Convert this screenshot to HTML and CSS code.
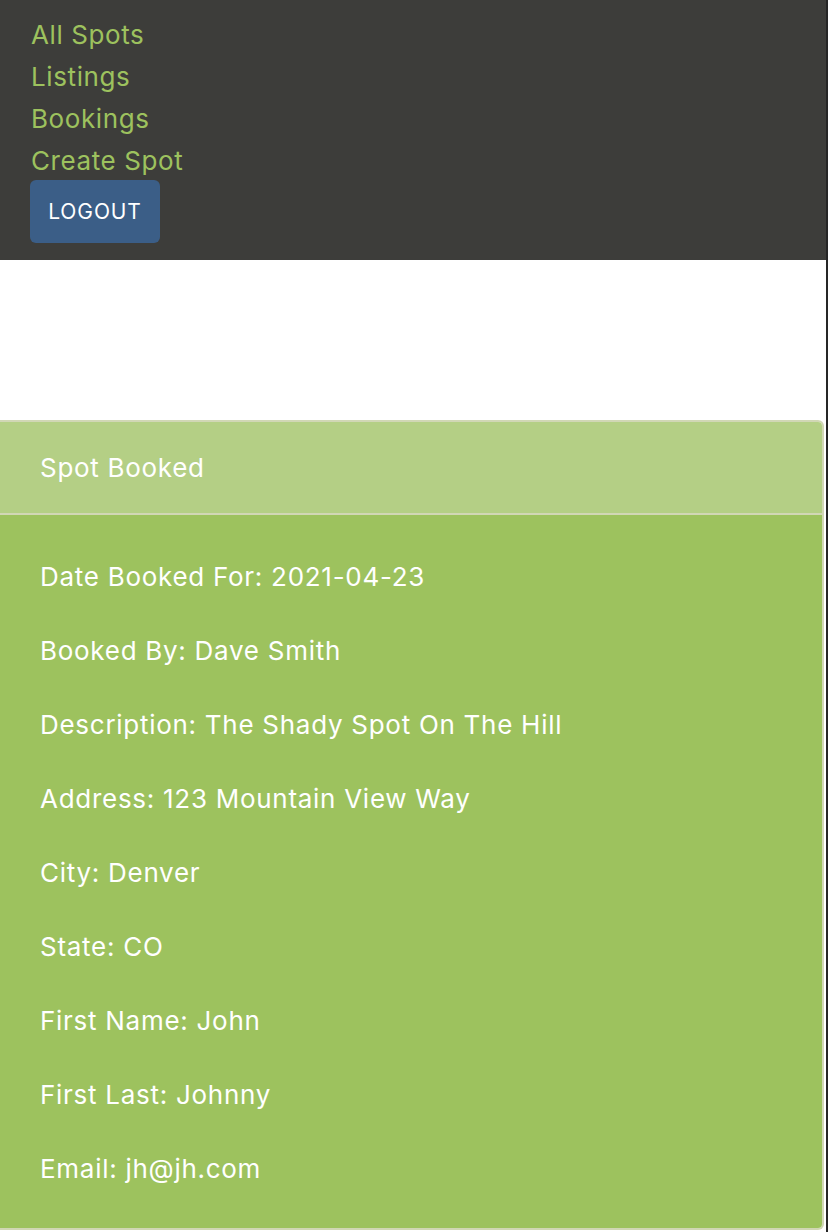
FILE: index.html
```html
<!DOCTYPE html>
<html lang="en">
<head>
<meta charset="utf-8">
<title>Spot Booked</title>
<link rel="stylesheet" href="styles.css">
</head>
<body>
<div class="page">
  <nav class="nav">
    <a class="nav-link" href="#">All Spots</a>
    <a class="nav-link" href="#">Listings</a>
    <a class="nav-link" href="#">Bookings</a>
    <a class="nav-link" href="#">Create Spot</a>
    <button class="logout" type="button">LOGOUT</button>
  </nav>
  <main class="main">
    <section class="card">
      <header class="card-header">Spot Booked</header>
      <div class="card-body">
        <p class="row">Date Booked For: 2021-04-23</p>
        <p class="row">Booked By: Dave Smith</p>
        <p class="row">Description: The Shady Spot On The Hill</p>
        <p class="row">Address: 123 Mountain View Way</p>
        <p class="row">City: Denver</p>
        <p class="row">State: CO</p>
        <p class="row">First Name: John</p>
        <p class="row">First Last: Johnny</p>
        <p class="row">Email: jh@jh.com</p>
      </div>
    </section>
  </main>
</div>
</body>
</html>
```
FILE: styles.css
```css
html {
  background: #262626;
}
body {
  margin: 0;
  font-family: Inter, "Noto Sans", "Liberation Sans", sans-serif;
}
.page {
  width: 826px;
  min-height: 1232px;
  background: #ffffff;
}
.nav {
  background: #3d3d3a;
  display: flex;
  flex-direction: column;
  align-items: flex-start;
  padding: 14px 0 17px 31px;
}
.nav-link {
  color: #9dc25e;
  text-decoration: none;
  font-size: 26px;
  letter-spacing: 0.6px;
  line-height: 42px;
}
.logout {
  margin-top: -2px;
  margin-left: -1px;
  width: 130px;
  height: 63px;
  border: none;
  border-radius: 6px;
  background: #3b5e87;
  color: #ffffff;
  font-family: inherit;
  font-size: 21px;
  letter-spacing: 0.9px;
}
.main {
  padding-top: 160px;
}
.card {
  border: 2px solid #d1d7b5;
  border-left: none;
  border-radius: 0 6px 6px 0;
  overflow: hidden;
  width: 824px;
  box-sizing: border-box;
}
.card-header {
  background: #b4cf85;
  color: #ffffff;
  font-size: 26px;
  letter-spacing: 0.7px;
  height: 91px;
  line-height: 92px;
  padding-left: 40px;
  border-bottom: 2px solid #d1d7b5;
}
.card-body {
  background: #9dc25e;
  display: flex;
  flex-direction: column;
  gap: 42px;
  padding: 46px 0 43px 40px;
}
.row {
  margin: 0;
  color: #ffffff;
  font-size: 26px;
  letter-spacing: 0.72px;
  line-height: 32px;
}
```
